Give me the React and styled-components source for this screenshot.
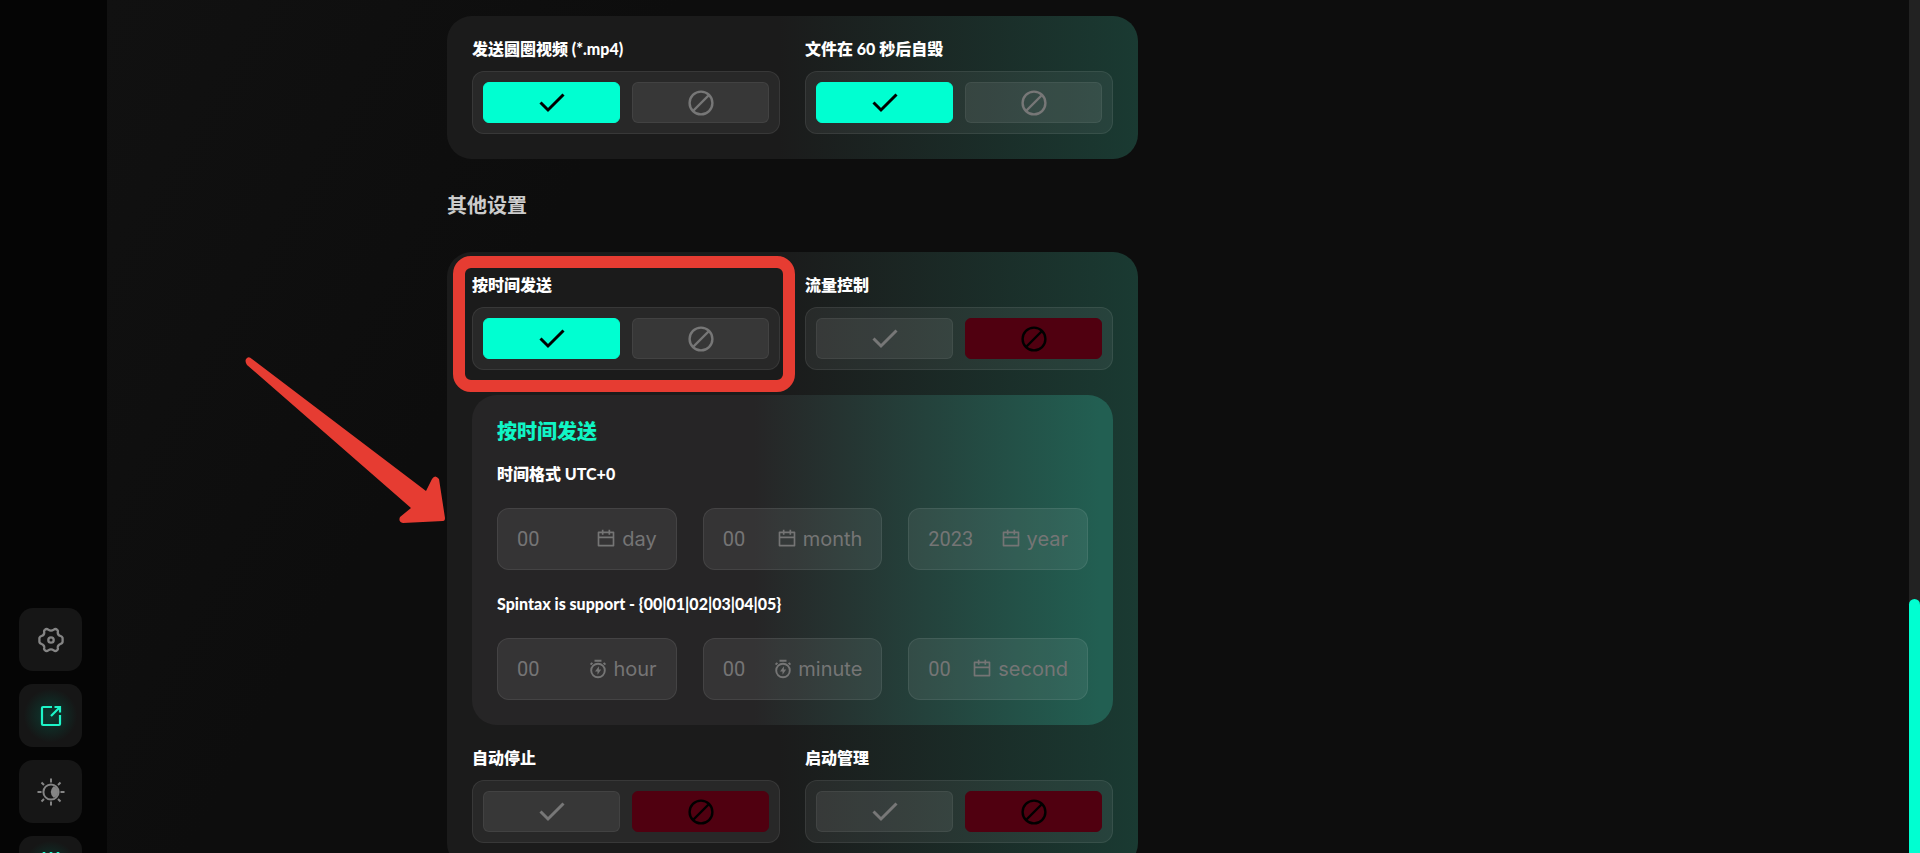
import React, { useState } from 'react';
import styled, { createGlobalStyle, css } from 'styled-components';
import { RiCalendarLine } from 'react-icons/ri';

const CheckIcon = () => (
  <svg width="26" height="26" viewBox="0 0 26 26" fill="none" stroke="currentColor" strokeWidth="3">
    <path d="M1.5 12.5 L9 20 L24.5 4.5" />
  </svg>
);

const BanIcon = () => (
  <svg width="26" height="26" viewBox="0 0 26 26" fill="none" stroke="currentColor" strokeWidth="2.4">
    <circle cx="13" cy="13" r="11.4" />
    <path d="M5 21 L21 5" />
  </svg>
);

const TimerIcon = () => (
  <svg width="18" height="20" viewBox="0 0 18 20" fill="none" stroke="currentColor" strokeWidth="1.9">
    <circle cx="9" cy="11.5" r="6.8" />
    <path d="M5.5 1.8 H12.5 M1.6 5.6 L3.4 3.8 M16.4 5.6 L14.6 3.8" />
    <path d="M9.9 7.3 L6 12.5 H8.5 V15.7 L12.2 10.6 H9.9 Z" fill="currentColor" stroke="none" />
  </svg>
);

const GearIcon = () => (
  <svg width="26" height="26" viewBox="0 0 26 26" fill="none" stroke="currentColor" strokeWidth="2.3" strokeLinejoin="round">
    <circle cx="13" cy="13" r="2.7" />
    <path d="M6.8 2.8 Q8.6 1.2 10.2 2.6 Q13 4.6 15.8 2.6 Q17.4 1.2 19.2 2.8 Q20.2 3.6 19.8 5 Q19.4 8 22.4 9 Q24.8 9.8 24.6 11.8 V14.2 Q24.8 16.2 22.4 17 Q19.4 18 19.8 21 Q20.2 22.4 19.2 23.2 Q17.4 24.8 15.8 23.4 Q13 21.4 10.2 23.4 Q8.6 24.8 6.8 23.2 Q5.8 22.4 6.2 21 Q6.6 18 3.6 17 Q1.2 16.2 1.4 14.2 V11.8 Q1.2 9.8 3.6 9 Q6.6 8 6.2 5 Q5.8 3.6 6.8 2.8 Z" />
  </svg>
);

const ShareIcon = () => (
  <svg width="22" height="22" viewBox="0 0 22 22" fill="none" stroke="currentColor" strokeWidth="2.2">
    <path d="M12 2 H3 Q2 2 2 3 V19 Q2 20 3 20 H19 Q20 20 20 19 V10" />
    <path d="M14.5 2 H20 V7.5 M20 2 L11 11" />
  </svg>
);

const SunIcon = () => (
  <svg width="28" height="28" viewBox="0 0 28 28" fill="none" stroke="currentColor" strokeWidth="2">
    <circle cx="14" cy="14" r="7.6" />
    <path d="M16.5 8.2 Q11 14 16.5 19.8 Q21 18.5 21 14 Q21 9.5 16.5 8.2 Z" fill="currentColor" stroke="none" />
    <path d="M14 0.5 V4.5 M14 23.5 V27.5 M0.5 14 H4.5 M23.5 14 H27.5 M4.5 4.5 L7 7 M21 21 L23.5 23.5 M4.5 23.5 L7 21 M21 7 L23.5 4.5" />
  </svg>
);

const SlidersIcon = () => (
  <svg width="22" height="32" viewBox="0 0 22 32" fill="none" stroke="currentColor" strokeWidth="2.6">
    <path d="M4 0 V32 M11 0 V32 M18 0 V32" />
  </svg>
);

const navItems = [
  { name: 'Settings', icon: <GearIcon /> },
  { name: 'Open', icon: <ShareIcon />, active: true },
  { name: 'Theme', icon: <SunIcon /> },
  { name: 'Filters', icon: <SlidersIcon />, active: true },
];

const dateFields = [
  { name: 'day', placeholder: '00', icon: <RiCalendarLine size={20} /> },
  { name: 'month', placeholder: '00', icon: <RiCalendarLine size={20} /> },
  { name: 'year', placeholder: '2023', icon: <RiCalendarLine size={20} /> },
];

const timeFields = [
  { name: 'hour', placeholder: '00', icon: <TimerIcon /> },
  { name: 'minute', placeholder: '00', icon: <TimerIcon /> },
  { name: 'second', placeholder: '00', icon: <RiCalendarLine size={20} /> },
];

const Toggle = ({ id, label, initial, marked }) => {
  const [on, setOn] = useState(initial);

  return (
    <Field>
      <Label id={id}>{label}</Label>
      <Switch role="radiogroup" aria-labelledby={id}>
        <Option $active={on} $tone="#00ffd1">
          <Radio type="radio" name={id} aria-label="on" checked={on} onChange={() => setOn(true)} />
          <CheckIcon />
        </Option>
        <Option $active={!on} $tone="#500010">
          <Radio type="radio" name={id} aria-label="off" checked={!on} onChange={() => setOn(false)} />
          <BanIcon />
        </Option>
      </Switch>
      {marked && <Marker />}
    </Field>
  );
};

const Inputs = ({ fields }) => (
  <InputRow>
    {fields.map((field) => (
      <InputBox key={field.name} htmlFor={field.name}>
        <Input id={field.name} type="text" placeholder={field.placeholder} />
        <Suffix>
          {field.icon}
          {field.name}
        </Suffix>
      </InputBox>
    ))}
  </InputRow>
);

const App = () => {
  return (
    <>
      <GlobalStyle />
      <Page>
        <Sidebar>
          <NavList>
            {navItems.map((item) => (
              <NavButton key={item.name} type="button" aria-label={item.name} $active={item.active}>
                {item.icon}
              </NavButton>
            ))}
          </NavList>
        </Sidebar>
        <Main>
          <Content>
            <Card>
              <Grid>
                <Toggle id="circle-video" label="发送圆圈视频 (*.mp4)" initial />
                <Toggle id="self-destruct" label="文件在 60 秒后自毁" initial />
              </Grid>
            </Card>
            <Heading>其他设置</Heading>
            <Card>
              <Grid>
                <Toggle id="send-by-time" label="按时间发送" initial marked />
                <Toggle id="flood-control" label="流量控制" initial={false} />
              </Grid>
              <Panel>
                <PanelTitle>按时间发送</PanelTitle>
                <PanelLabel>时间格式 UTC+0</PanelLabel>
                <Inputs fields={dateFields} />
                <PanelLabel>Spintax is support - {'{00|01|02|03|04|05}'}</PanelLabel>
                <Inputs fields={timeFields} />
              </Panel>
              <Grid>
                <Toggle id="auto-stop" label="自动停止" initial={false} />
                <Toggle id="launch-control" label="启动管理" initial={false} />
              </Grid>
              <Arrow viewBox="0 0 204 168" aria-hidden="true">
                <path
                  d="M8 4 L182 136 L188 124 Q191 119 195 124 L201 163 Q201 166 199 166 L159 168 Q154 167 156 162 L167 153 L3 10 Q0 5 3 3 Q5 1 8 4 Z"
                  fill="#e63c32"
                />
              </Arrow>
            </Card>
          </Content>
        </Main>
        <ScrollTrack>
          <ScrollThumb />
        </ScrollTrack>
      </Page>
    </>
  );
};

export default App;

const GlobalStyle = createGlobalStyle`
  * {
    box-sizing: border-box;
  }

  body {
    margin: 0;
    background: #0d0d0d;
    color: #fff;
    font-family: Inter, "Noto Sans CJK SC", sans-serif;
  }
`;

const Page = styled.div`
  display: flex;
  height: 100vh;
  overflow: hidden;
`;

const Sidebar = styled.nav`
  flex: 0 0 107px;
  display: flex;
  flex-direction: column;
  justify-content: flex-end;
  background: #050505;
`;

const NavList = styled.div`
  display: flex;
  flex-direction: column;
  gap: 13px;
  height: 245px;
  padding-left: 19px;
  overflow: hidden;
`;

const NavButton = styled.button`
  flex: none;
  display: flex;
  align-items: center;
  justify-content: center;
  width: 63px;
  height: 63px;
  padding: 0;
  border: 0;
  border-radius: 14px;
  background: #161616;
  color: #858585;
  cursor: pointer;

  ${({ $active }) =>
    $active &&
    css`
      background: radial-gradient(circle, #0b3b31 0%, #161616 60%);
      color: #1df5c8;
    `}
`;

const Main = styled.main`
  flex: 1;
  min-width: 0;
  padding: 16px 24px 0 340px;
  overflow: hidden;
  background: linear-gradient(120deg, #111 0%, #0d0d0d 25%);
`;

const Content = styled.div`
  max-width: 691px;
`;

const Card = styled.section`
  position: relative;
  display: flex;
  flex-direction: column;
  gap: 25px;
  padding: 25px;
  border-radius: 25px;
  background: linear-gradient(90deg, #1b1b1b 48%, #1a3a32 100%);
`;

const Grid = styled.div`
  display: grid;
  grid-template-columns: 1fr 1fr;
  gap: 25px;
`;

const Field = styled.div`
  position: relative;
`;

const Label = styled.div`
  margin-bottom: 14px;
  font-family: Lato, "Noto Sans CJK SC", sans-serif;
  font-size: 16px;
  font-weight: 900;
  line-height: 16px;
`;

const Switch = styled.div`
  display: grid;
  grid-template-columns: 1fr 1fr;
  gap: 12px;
  padding: 10px;
  border: 1px solid rgba(255, 255, 255, 0.08);
  border-radius: 12px;
  background: rgba(255, 255, 255, 0.06);
`;

const Option = styled.label`
  position: relative;
  display: flex;
  align-items: center;
  justify-content: center;
  height: 41px;
  border: 1px solid rgba(255, 255, 255, 0.06);
  border-radius: 6px;
  background: rgba(255, 255, 255, 0.07);
  color: #777;
  cursor: pointer;

  ${({ $active, $tone }) =>
    $active &&
    css`
      border-color: ${$tone};
      background: ${$tone};
      color: #000;
    `}
`;

const Radio = styled.input`
  position: absolute;
  inset: 0;
  width: 100%;
  height: 100%;
  margin: 0;
  opacity: 0;
  cursor: pointer;
`;

const Marker = styled.div`
  position: absolute;
  inset: -21px -15px -22px -19px;
  border: 12px solid #e63c32;
  border-radius: 18px;
  pointer-events: none;
`;

const Arrow = styled.svg`
  position: absolute;
  top: 103px;
  left: -203px;
  width: 204px;
  height: 168px;
  overflow: visible;
  pointer-events: none;
`;

const Heading = styled.h2`
  margin: 35px 0 34px;
  color: #ccc;
  font-size: 20px;
  font-weight: 700;
  line-height: 24px;
`;

const Panel = styled.div`
  padding: 25px;
  border-radius: 25px;
  background: linear-gradient(90deg, #262526 44%, #225f52 98%);
`;

const PanelTitle = styled.h3`
  margin: 0 0 20px;
  color: #10f5c5;
  font-size: 20px;
  font-weight: 900;
  line-height: 24px;
`;

const PanelLabel = styled.div`
  margin-bottom: 24px;
  font-family: Lato, "Noto Sans CJK SC", sans-serif;
  font-size: 16px;
  font-weight: 900;
  line-height: 20px;
`;

const InputRow = styled.div`
  display: grid;
  grid-template-columns: repeat(3, minmax(0, 1fr));
  gap: 26px;

  & + ${PanelLabel} {
    margin-top: 24px;
  }
`;

const InputBox = styled.label`
  display: flex;
  align-items: center;
  height: 62px;
  padding: 0 19px;
  border: 1px solid rgba(255, 255, 255, 0.08);
  border-radius: 12px;
  background: rgba(255, 255, 255, 0.07);
  color: #757575;
`;

const Input = styled.input`
  flex: 1;
  min-width: 0;
  padding: 0;
  border: 0;
  outline: 0;
  background: none;
  color: #fff;
  font-family: Roboto, sans-serif;
  font-size: 20px;
  line-height: 24px;

  &::placeholder {
    color: #757575;
    opacity: 1;
  }
`;

const Suffix = styled.span`
  display: flex;
  align-items: center;
  gap: 6px;
  font-size: 20px;
  line-height: 24px;
`;

const ScrollTrack = styled.div`
  flex: 0 0 11px;
  display: flex;
  flex-direction: column;
  justify-content: flex-end;
  background: #222;
`;

const ScrollThumb = styled.div`
  height: 254px;
  border-radius: 6px 6px 0 0;
  background: #00ffd1;
`;
